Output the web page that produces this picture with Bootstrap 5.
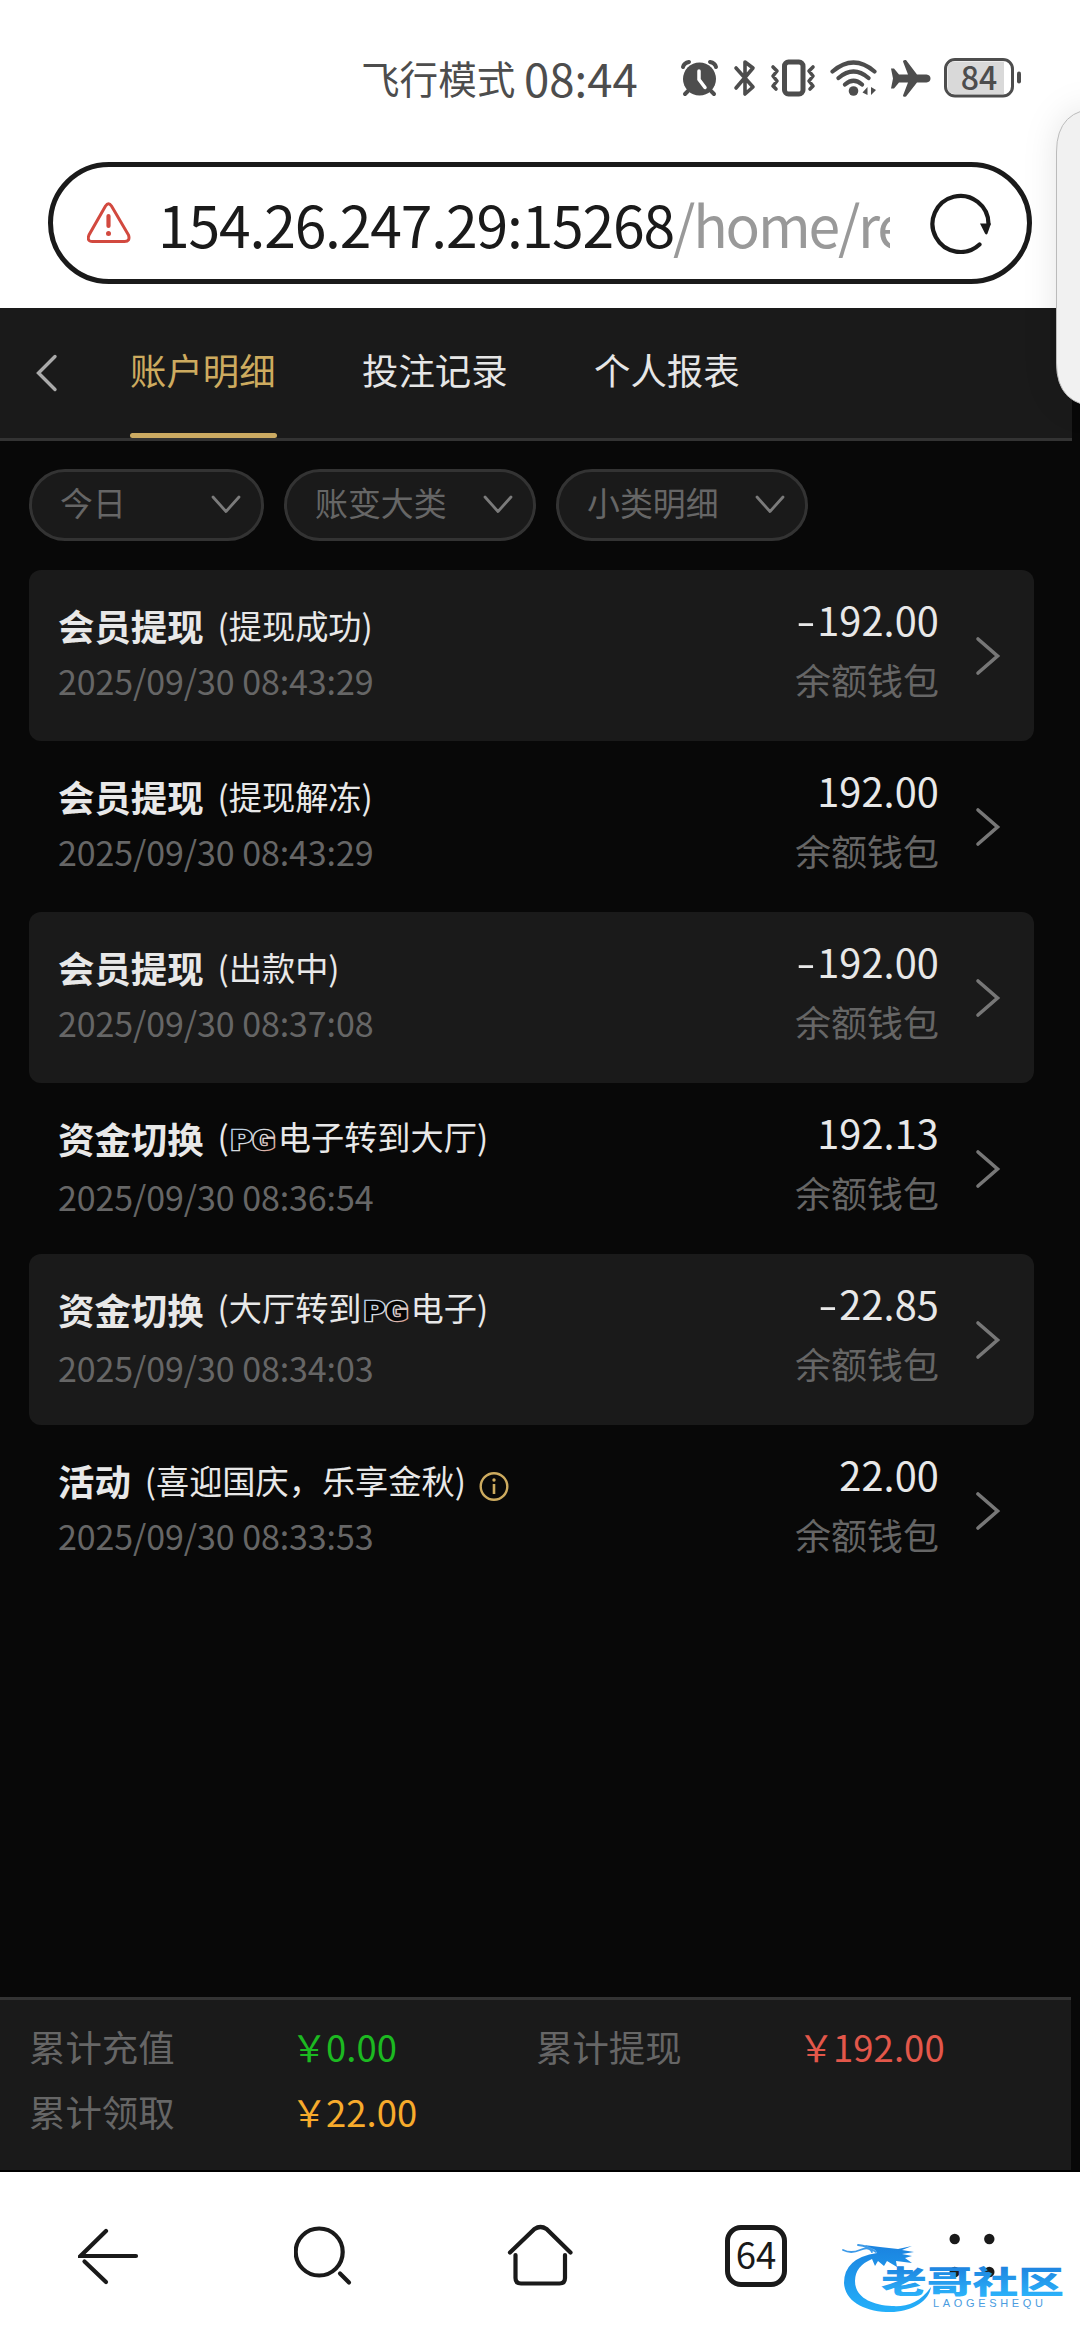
<!DOCTYPE html>
<html lang="zh-CN">
<head>
<meta charset="utf-8">
<meta name="viewport" content="width=device-width, initial-scale=1">
<title>账户明细</title>
<link href="https://cdn.jsdelivr.net/npm/bootstrap@5.3.0/dist/css/bootstrap.min.css" rel="stylesheet">
<style>
body{font-family:"Noto Sans CJK SC",sans-serif;width:1080px;height:2340px;overflow:hidden;background:#fff;color:#e8e8e8;font-size:36.4px;white-space:nowrap}
svg{display:block;flex:none}
.status-bar{height:162px;padding:45px 0 0 361px;color:#4d4d4d}
.status-line{height:66px;line-height:66px}
.mode-label{font-size:38.6px;width:163px;margin-top:-2px}
.clock{font-size:45.5px;width:155px;margin-top:-3px}
.address{width:984px;height:122px;margin-left:48px;border:5px solid #1a1a1a;color:#1a1a1a;padding:0 35px 0 34px}
.url-text{margin-left:27px;width:732px;font-size:57px;line-height:100px;letter-spacing:-1.15px}
.url-text i{font-style:normal;color:#999;letter-spacing:-2.2px;margin-left:-1px}
.web-page{margin-top:24px;height:1864px;background:#080808;border-bottom:2px solid #000}
.top-tabs{width:1072px;height:133px;background:#1a1a1a;border-bottom:3px solid #333;padding-left:35px}
.top-tabs .nav-link{padding:0;width:147px;margin-right:85px;height:130px;line-height:122px;color:#e6e6e6;border-radius:0}
.top-tabs .nav-link.active{color:#cdab5f;box-shadow:none}
.top-tabs .nav-link.active::after{content:"";display:block;height:5px;margin-top:3px;border-radius:3px;background:#cbaa62}
.back{width:95px}
.filters{padding:28px 0 29px 29px}
.filter-pill{height:72px;border:3px solid #333;background:#1a1a1a;color:#666;font-size:32.9px;line-height:60px;padding:0 19px 0 28px}
.filter-pill span{margin-top:-6px}
.entries{width:1005px;margin-left:29px}
.entry{height:171px;border-radius:12px;padding:0 33px 0 29px}
.entry:nth-child(odd){background:#1a1a1a}
.entry-main{padding-top:27px}
.entry-title{height:56px;line-height:56px}
.entry-title b{font-weight:700}
.entry-title .detail{font-size:33.2px;margin-left:14px}
.entry-time{line-height:56px;font-size:34px;color:#666;letter-spacing:-.1px}
.with-logo .entry-time{margin-top:3px}
.with-logo .detail{margin-top:-2px}
.entry-sum{padding-top:19px;margin-right:36px;line-height:60px}
.amount{font-size:39.7px;letter-spacing:.1px}
.neg{display:inline-block;transform:scaleX(1.4);margin-right:4px}
.muted-text{color:#666;font-size:36px}
.summary{width:1071px;height:173px;background:#1a1a1a;border-top:3px solid #333;padding:14px 0 0 29px;line-height:64.5px}
.label-col{width:265px;color:#666}
.value-col{width:242px;letter-spacing:.1px}
.yen{display:inline-block;width:32px;text-indent:-3px}
.green{color:#1cb921}.orange{color:#f7ab2c}.red{color:#e3574a}
.toolbar{height:168px;padding-left:78px}
.page-count{width:62px;height:62px;border:5px solid #1a1a1a;border-radius:16px;font-size:36.5px;line-height:47px;color:#1a1a1a;text-align:center}
.side-panel{right:0;top:60px}
.side-panel path{filter:drop-shadow(0 0 16px rgba(0,0,0,.1))}
.community-mark{left:840px;top:2240px}
</style>
<script src="https://cdn.jsdelivr.net/npm/bootstrap@5.3.0/dist/js/bootstrap.bundle.min.js"></script>
</head>
<body class="position-relative d-flex flex-column">
<svg width="0" height="0" class="position-absolute">
  <symbol id="chev-r" viewBox="0 0 26 40"><path d="M3 3 22.500 20 3 37" fill="none" stroke="#777" stroke-width="3.600" stroke-linecap="round"/></symbol>
  <symbol id="chev-d" viewBox="0 0 32 22"><path d="M3 3 16 17.500 29 3" fill="none" stroke="#7b7b7b" stroke-width="2.800" stroke-linecap="round" stroke-linejoin="round"/></symbol>
</svg>

<header class="status-bar flex-shrink-0">
  <div class="status-line d-flex align-items-center">
    <span class="mode-label">飞行模式</span><span class="clock">08:44</span>
    <svg width="345" height="44" viewBox="678 56 345 44" fill="none" stroke="#4d4d4d" stroke-linecap="round">
      <ellipse cx="698.500" cy="79" rx="16.500" ry="16.500" fill="#4d4d4d" stroke="none"/>
      <path d="M682 67Q683 63 688 62M715 67Q714 63 709 62M687 91l-3 3M710 91l3 3" stroke-width="4"/>
      <path d="M698 71v8.500l6 8" stroke="#fff" stroke-width="3.500"/>
      <path d="M735 68l17 19-8 7V62l8 6-17 20" stroke-width="3.600" stroke-linejoin="round"/>
      <rect x="783.500" y="62" width="18.500" height="32" rx="4" stroke-width="5"/>
      <path d="M772 67l4 4-4 5 4 5-4 5 3 3M812 67l-4 4 4 5-4 5 4 5-3 3" stroke-width="3.600" stroke-linejoin="round"/>
      <path d="M831.500 71.500q21-18 42 0M837.500 78q15-13 30 0M844 84.500q8.500-7.500 17 0" stroke-width="4.200"/>
      <circle cx="852.500" cy="91" r="4.800" fill="#4d4d4d" stroke="none"/>
      <path d="M866.500 87v8l-5-2.500zM870 87v8l5-5z" fill="#4d4d4d" stroke="none"/>
      <path d="M890 68.500h3l5 6h9l-5-13q0-2 3-1.500l11 14.500h9.500q4 .5 4 4t-4 4H916l-11 14q-3 1-3-1l5-13h-9l-5 6h-3l2-10z" fill="#4d4d4d" stroke="none"/>
      <rect x="944.500" y="59.500" width="67" height="36.500" rx="9.500" fill="#fff" stroke-width="3"/>
      <path d="M953.500 61.500H1003V94H953.500Q946.500 94 946.500 87V68.500Q946.500 61.500 953.500 61.500z" fill="#d9d9d9" stroke="none"/>
      <path d="M1018 73.500v8" stroke-width="4"/>
      <text x="978" y="89.500" text-anchor="middle" font-family="Noto Sans CJK SC,sans-serif" font-size="32" font-weight="500" fill="#4d4d4d" stroke="none">84</text>
    </svg>
  </div>
</header>

<div class="address rounded-pill d-flex align-items-center flex-shrink-0">
  <svg width="44" height="42" viewBox="0 0 44 42" fill="none" stroke="#d2493f"><path d="M18.500 4Q21.500-.5 24.500 4L41.500 33Q43.500 39.500 37.500 39.500H5.500Q-.5 39.500 2 33z" stroke-width="3"/><path d="M21.500 14v10" stroke-width="4.200" stroke-linecap="round"/><circle cx="21.500" cy="31.500" r="2.500" fill="#d2493f" stroke="none"/></svg>
  <div class="url-text overflow-hidden">154.26.247.29:15268<i>/home/re</i></div>
  <svg class="ms-auto" width="62" height="62" viewBox="0 0 62 62"><path d="M49.500 52.500A28 28 0 1 1 58.500 32" fill="none" stroke="#1a1a1a" stroke-width="4.200" stroke-linecap="round"/><path d="M50 31.500h11l-3.500 10q-1 2-2.500 0z" fill="#1a1a1a"/></svg>
</div>

<main class="web-page d-flex flex-column flex-shrink-0">
  <nav class="top-tabs nav flex-nowrap flex-shrink-0">
    <a class="back" href="#"><svg width="24" height="126" viewBox="0 0 24 126"><path d="M20 48.500 3.500 65 20 81.500" fill="none" stroke="#aaa" stroke-width="3.400" stroke-linecap="round"/></svg></a>
    <a class="nav-link active" href="#">账户明细</a>
    <a class="nav-link" href="#">投注记录</a>
    <a class="nav-link" href="#">个人报表</a>
  </nav>

  <div class="filters d-flex">
    <div class="filter-pill rounded-pill d-flex align-items-center justify-content-between" style="width:235px;margin-right:20px"><span>今日</span><svg width="32" height="22"><use href="#chev-d"/></svg></div>
    <div class="filter-pill rounded-pill d-flex align-items-center justify-content-between" style="width:252px;margin-right:20px"><span>账变大类</span><svg width="32" height="22"><use href="#chev-d"/></svg></div>
    <div class="filter-pill rounded-pill d-flex align-items-center justify-content-between" style="width:252px"><span>小类明细</span><svg width="32" height="22"><use href="#chev-d"/></svg></div>
  </div>

  <div class="entries">
    <div class="entry d-flex"><div class="entry-main"><div class="entry-title d-flex"><b>会员提现</b><span class="detail">(提现成功)</span></div><div class="entry-time">2025/09/30 08:43:29</div></div>
      <div class="entry-sum ms-auto text-end"><div class="amount"><span class="neg">-</span>192.00</div><div class="muted-text">余额钱包</div></div><svg class="align-self-center" width="26" height="40"><use href="#chev-r"/></svg></div>
    <div class="entry d-flex"><div class="entry-main"><div class="entry-title d-flex"><b>会员提现</b><span class="detail">(提现解冻)</span></div><div class="entry-time">2025/09/30 08:43:29</div></div>
      <div class="entry-sum ms-auto text-end"><div class="amount">192.00</div><div class="muted-text">余额钱包</div></div><svg class="align-self-center" width="26" height="40"><use href="#chev-r"/></svg></div>
    <div class="entry d-flex"><div class="entry-main"><div class="entry-title d-flex"><b>会员提现</b><span class="detail">(出款中)</span></div><div class="entry-time">2025/09/30 08:37:08</div></div>
      <div class="entry-sum ms-auto text-end"><div class="amount"><span class="neg">-</span>192.00</div><div class="muted-text">余额钱包</div></div><svg class="align-self-center" width="26" height="40"><use href="#chev-r"/></svg></div>
    <div class="entry with-logo d-flex"><div class="entry-main"><div class="entry-title d-flex"><b>资金切换</b><span class="detail d-flex">(<svg width="49" height="56" viewBox="0 0 50 56"><use href="#pg"/></svg>电子转到大厅)</span></div><div class="entry-time">2025/09/30 08:36:54</div></div>
      <div class="entry-sum ms-auto text-end"><div class="amount">192.13</div><div class="muted-text">余额钱包</div></div><svg class="align-self-center" width="26" height="40"><use href="#chev-r"/></svg></div>
    <div class="entry with-logo d-flex"><div class="entry-main"><div class="entry-title d-flex"><b>资金切换</b><span class="detail d-flex">(大厅转到<svg width="49" height="56" viewBox="0 0 50 56"><defs><linearGradient id="pgEdge" x1="0" y1="0" x2="1" y2="1"><stop offset="0" stop-color="#a9c9e8"/><stop offset=".55" stop-color="#ddd"/><stop offset="1" stop-color="#d88a78"/></linearGradient><text id="pg" x="2" y="42" font-family="Roboto,sans-serif" font-weight="900" font-size="28" textLength="45" lengthAdjust="spacingAndGlyphs" fill="#050505" stroke="url(#pgEdge)" stroke-width="2.600" paint-order="stroke">PG</text></defs><use href="#pg"/></svg>电子)</span></div><div class="entry-time">2025/09/30 08:34:03</div></div>
      <div class="entry-sum ms-auto text-end"><div class="amount"><span class="neg">-</span>22.85</div><div class="muted-text">余额钱包</div></div><svg class="align-self-center" width="26" height="40"><use href="#chev-r"/></svg></div>
    <div class="entry d-flex"><div class="entry-main"><div class="entry-title d-flex"><b>活动</b><span class="detail">(喜迎国庆，乐享金秋)</span><svg style="margin-left:13px" width="30" height="60" viewBox="0 0 30 60"><circle cx="15" cy="34.500" r="13.300" fill="none" stroke="#cdab5f" stroke-width="2.400"/><path d="M15 32v10" stroke="#cdab5f" stroke-width="2.600"/><circle cx="15" cy="28" r="1.700" fill="#cdab5f"/></svg></div><div class="entry-time">2025/09/30 08:33:53</div></div>
      <div class="entry-sum ms-auto text-end"><div class="amount">22.00</div><div class="muted-text">余额钱包</div></div><svg class="align-self-center" width="26" height="40"><use href="#chev-r"/></svg></div>
  </div>

  <footer class="summary d-flex flex-wrap align-content-start mt-auto flex-shrink-0">
    <div class="label-col">累计充值</div><div class="value-col green"><span class="yen">￥</span>0.00</div>
    <div class="label-col">累计提现</div><div class="value-col red"><span class="yen">￥</span>192.00</div>
    <div class="label-col">累计领取</div><div class="value-col orange"><span class="yen">￥</span>22.00</div>
  </footer>
</main>

<nav class="toolbar d-flex align-items-center flex-shrink-0">
  <svg width="62" height="60" viewBox="78 2226 62 60" fill="none" stroke="#1a1a1a" stroke-width="4.200" stroke-linecap="round"><path d="M136 2256H80.500L106 2231"/><path d="M84.500 2261.500 106 2282"/></svg>
  <svg style="margin-left:154px" width="60" height="62" viewBox="294 2225 60 62" fill="none" stroke="#1a1a1a" stroke-width="4.200" stroke-linecap="round"><circle cx="319.200" cy="2252" r="23.500"/><path d="M340 2273.500l9 9"/></svg>
  <svg style="margin-left:152px" width="68" height="64" viewBox="506 2225 68 64" fill="none" stroke="#1a1a1a" stroke-width="4.200" stroke-linecap="round"><path d="M510 2253.500 534.500 2230Q540.500 2226 546.500 2230L570.500 2253.500"/><path d="M515.500 2256V2279Q515.500 2284.500 521 2284.500H559.500Q565 2284.500 565 2279V2256"/></svg>
  <div class="page-count" style="margin-left:151px">64</div>
  <svg style="margin-left:162px" width="46" height="64" viewBox="949 2224 46 64" fill="#1a1a1a"><circle cx="954.700" cy="2239" r="5.200"/><circle cx="989.300" cy="2239" r="5.200"/><circle cx="954.700" cy="2272" r="5.200"/><circle cx="989.300" cy="2272" r="5.200"/></svg>
</nav>

<svg class="side-panel position-absolute" width="64" height="400" viewBox="1016 60 64 400"><path d="M1100 108.500Q1056.500 108.500 1056.500 152V363Q1056.500 406.500 1100 406.500z" fill="#f1f1f1" stroke="#bbb"/></svg>

<svg class="community-mark position-absolute" width="226" height="76" viewBox="840 2240 226 76">
  <defs><linearGradient id="sea" gradientUnits="userSpaceOnUse" x1="0" y1="2247" x2="0" y2="2312"><stop offset="0" stop-color="#1b84e0"/><stop offset="1" stop-color="#24b0fa"/></linearGradient>
  <linearGradient id="ink" gradientUnits="userSpaceOnUse" x1="0" y1="2266" x2="0" y2="2296"><stop offset="0" stop-color="#1f83df"/><stop offset="1" stop-color="#2bb2fa"/></linearGradient></defs>
  <path d="M877 2253Q844 2258 844 2283C845 2303 868 2313 894 2312 914 2310 929 2301 931 2287 920 2303 906 2307 892 2306 871 2305 855 2297 855 2281Q855 2266 872 2259L875 2266 878 2261 884 2266 887 2261 897 2267 896 2261 912 2263 905 2258 912 2256 902 2254 914 2252 902 2250 912 2246 898 2249 880 2247 864 2245 875 2250z" fill="url(#sea)"/>
  <path d="M843 2250Q851 2254 860 2250T872 2252M858 2245Q868 2246 876 2252" fill="none" stroke="#3d9ae8" stroke-width="1.800" stroke-linecap="round"/>
  <text x="881" y="2293" font-family="Noto Sans CJK SC,sans-serif" font-weight="900" font-size="31" textLength="183" lengthAdjust="spacingAndGlyphs" fill="url(#ink)">老哥社区</text>
  <text x="933" y="2306.500" font-family="Liberation Sans,sans-serif" font-size="11" textLength="110" fill="#4a9ce0">LAOGESHEQU</text>
</svg>
</body>
</html>
